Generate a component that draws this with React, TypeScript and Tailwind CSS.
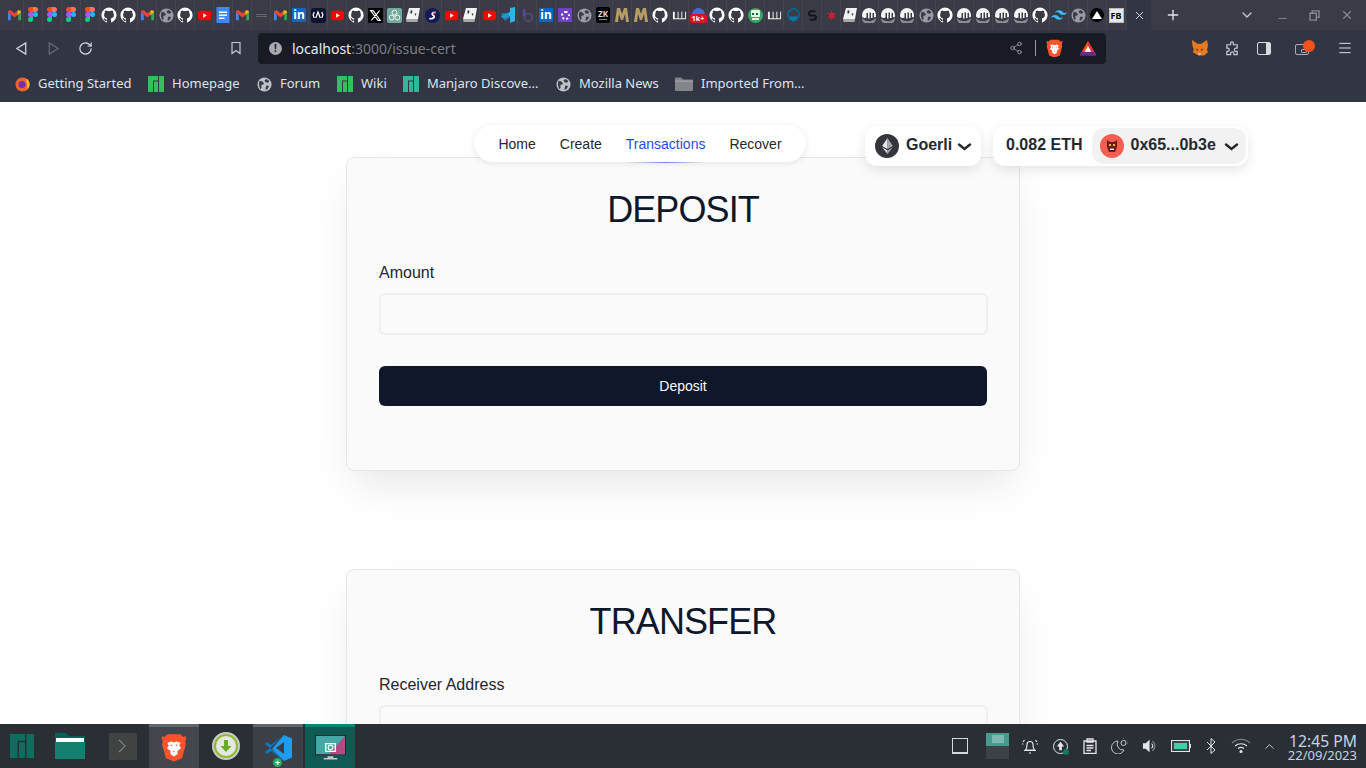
import { ChevronDown, ChevronUp, Menu, Minus, Plus, RotateCw, Share2, X } from 'lucide-react'
import type { ReactNode } from 'react'

const uiFont = "font-['Noto_Sans',sans-serif]"
const pageFont = "font-['Liberation_Sans',Arial,sans-serif]"

type TabIcon =
  | 'gmail' | 'figma' | 'github' | 'globe' | 'youtube' | 'docs' | 'dash' | 'linkedin'
  | 'anchor' | 'x' | 'gpt' | 'note' | 'stripe' | 'vs' | 'b' | 'gear' | 'zk' | 'gold'
  | 'bars' | 'badge' | 'bot' | 'headset' | 'sdark' | 'star' | 'mono' | 'wind' | 'tri' | 'fb'

const tabs: TabIcon[] = [
  'gmail', 'figma', 'figma', 'figma', 'figma', 'github', 'github', 'gmail', 'globe', 'github',
  'youtube', 'docs', 'gmail', 'dash', 'gmail', 'linkedin', 'anchor', 'youtube', 'github', 'x',
  'gpt', 'note', 'stripe', 'youtube', 'note', 'youtube', 'vs', 'b', 'linkedin', 'gear',
  'globe', 'zk', 'gold', 'gold', 'github', 'bars', 'badge', 'github', 'github', 'bot',
  'bars', 'headset', 'sdark', 'star', 'note', 'mono', 'mono', 'mono', 'globe', 'github',
  'mono', 'mono', 'mono', 'mono', 'github', 'wind', 'globe', 'tri', 'fb',
]

const githubPath =
  'M8 .6a7.6 7.6 0 0 0-2.4 14.8c.4.1.5-.2.5-.4v-1.4c-2.1.5-2.6-.9-2.6-.9-.3-.9-.8-1.1-.8-1.1-.7-.5 0-.5 0-.5.8.1 1.2.8 1.2.8.7 1.1 1.8.8 2.2.6.1-.5.3-.8.5-1-1.7-.2-3.5-.8-3.5-3.7 0-.8.3-1.5.8-2-.1-.2-.3-1 .1-2 0 0 .6-.2 2.1.8a7 7 0 0 1 3.8 0c1.5-1 2.1-.8 2.1-.8.4 1 .2 1.8.1 2 .5.5.8 1.2.8 2 0 2.9-1.8 3.5-3.5 3.7.3.2.5.7.5 1.4V15c0 .2.1.5.5.4A7.6 7.6 0 0 0 8 .6Z'

const tailwindPath =
  'M8 3.2c-2.133 0-3.467 1.067-4 3.2.8-1.067 1.733-1.467 2.8-1.2.609.152 1.044.594 1.525 1.083C9.108 7.08 10.015 8 12 8c2.133 0 3.467-1.067 4-3.2-.8 1.067-1.733 1.467-2.8 1.2-.609-.152-1.044-.594-1.525-1.083C10.892 4.12 9.985 3.2 8 3.2ZM4 8c-2.133 0-3.467 1.067-4 3.2.8-1.067 1.733-1.467 2.8-1.2.609.152 1.044.594 1.525 1.083C5.108 11.88 6.015 12.8 8 12.8c2.133 0 3.467-1.067 4-3.2-.8 1.067-1.733 1.467-2.8 1.2-.609-.152-1.044-.594-1.525-1.083C6.892 8.92 5.985 8 4 8Z'

function Globe({ color = '#9a9ca3' }: { color?: string }) {
  return (
    <svg viewBox="0 0 16 16" className="size-[15px]">
      <circle cx="8" cy="8" r="7.500" fill={color} />
      <path d="M3 4c2 0 3 1 4 2s0 2-1 2-2 1-1 3l-1 2C2 11 1.500 6 3 4Zm7-2 3 2-1 2-3-.5L8 3.500ZM10 9l3 .5-2 3.500-2 .5.5-3Z" fill="#3b3d48" />
    </svg>
  )
}

function MonoLogo() {
  return (
    <svg viewBox="0 0 16 16" className="size-4">
      <path d="M1 11a7 7 0 0 0 14 0c-2 2.500-5 3.500-8 3-3 0-5-1.500-6-3Z" fill="#8b8c91" />
      <path d="M1 8a7 7 0 0 1 14 0v1.500c-.500 1-1.500 1-2 .5V6h-1.500v5H10V5.500H8.500V11.500H7V6H5.500v4.500c-1 .800-3 .800-4.500-1Z" fill="#f4f4f4" />
    </svg>
  )
}

function TabGlyph({ kind }: { kind: TabIcon }) {
  switch (kind) {
    case 'gmail':
      return (
        <svg viewBox="0 0 16 16" className="size-[15px]">
          <path d="M1 4v9h3V7Z" fill="#4285f4" />
          <path d="M15 4v9h-3V7Z" fill="#34a853" />
          <path d="M1 4.500 8 10l3-2.300V3.300L8 5.500 4 2.500C2.500 1.800 1 3 1 4.500Z" fill="#ea4335" />
          <path d="M11 3.300v4.400l4-3.200c0-1.700-1.700-2.700-3-2Z" fill="#fbbc04" />
        </svg>
      )
    case 'figma':
      return (
        <svg viewBox="0 0 16 16" className="size-4">
          <path d="M5.500 0H8v5H5.500a2.500 2.500 0 0 1 0-5Z" fill="#f24e1e" />
          <path d="M8 0h2.500a2.500 2.500 0 0 1 0 5H8Z" fill="#ff7262" />
          <path d="M5.500 5H8v5H5.500a2.500 2.500 0 0 1 0-5Z" fill="#a259ff" />
          <circle cx="10.500" cy="7.500" r="2.500" fill="#1abcfe" />
          <path d="M5.500 10H8v2.500A2.500 2.500 0 1 1 5.500 10Z" fill="#0acf83" />
        </svg>
      )
    case 'github':
      return (
        <svg viewBox="0 0 16 16" className="size-4">
          <path d={githubPath} fill="#fff" />
          <path d="M5.300 3.600c1.500 1 4 1 5.400 0 .8.800 1.500 1.600 1.500 3 0 2.400-1.800 3.200-4.200 3.200S3.800 9 3.800 6.600c0-1.400.7-2.200 1.500-3Z" fill="#3a3b47" />
          <path d="M6.100 10.300h3.800v4.500H6.100Zm-3.400.8 2.600 1.800v1.200H4Z" fill="#3a3b47" />
        </svg>
      )
    case 'globe':
      return <Globe />
    case 'youtube':
      return (
        <svg viewBox="0 0 16 16" className="size-[15px]">
          <rect x="1" y="3" width="14" height="10" rx="3" fill="#f00" />
          <path d="m6.500 5.500 4 2.500-4 2.500Z" fill="#fff" />
        </svg>
      )
    case 'docs':
      return (
        <svg viewBox="0 0 16 16" className="size-4">
          <rect x="1.500" width="13" height="16" fill="#4285f4" />
          <path d="M4 4.500h8v1.500H4Zm0 3h8V9H4Zm0 3h5.500V12H4Z" fill="#fff" />
        </svg>
      )
    case 'dash':
      return <span className="block h-[3px] w-[11px] border-y border-[#666]" />
    case 'linkedin':
      return (
        <div className="flex size-[14px] items-center justify-center bg-[#0a66c2] text-[12px] font-bold leading-none text-white">in</div>
      )
    case 'anchor':
      return (
        <div className="flex size-[15px] items-center justify-center rounded-[3px] bg-[#10122e]">
          <svg viewBox="0 0 16 16" className="size-3" fill="none" stroke="#fff" strokeWidth="1.600">
            <path d="m5 12 3-8 3 8M3 4 1.500 8 3 12m10-8 1.500 4L13 12" />
          </svg>
        </div>
      )
    case 'x':
      return (
        <div className="flex size-[15px] items-center justify-center bg-black">
          <svg viewBox="0 0 16 16" className="size-[13px]" fill="none" stroke="#fff" strokeWidth="1.300">
            <path d="m2 2 9 12h3L5 2Zm11 0L3 14" />
          </svg>
        </div>
      )
    case 'gpt':
      return (
        <div className="flex size-[15px] items-center justify-center rounded-[2px] bg-[#74aa9c]">
          <svg viewBox="0 0 16 16" className="size-[13px]" fill="none" stroke="#fff" strokeWidth="1.100">
            <circle cx="8" cy="4.500" r="3" />
            <circle cx="4.500" cy="10.500" r="3" />
            <circle cx="11.500" cy="10.500" r="3" />
          </svg>
        </div>
      )
    case 'note':
      return (
        <svg viewBox="0 0 16 16" className="size-4">
          <path d="M4 1h11l-2 11H1Z" fill="#f2f2f2" />
          <path d="M1 12h12l-.5 3H1.500Z" fill="#a8a8a8" />
          <path d="M5.500 3.500h2l-.5 3h-1.500Zm4 3h2l-1 2.500Z" fill="#333" />
        </svg>
      )
    case 'stripe':
      return (
        <div className="flex size-[15px] items-center justify-center rounded-full bg-[#141a57]">
          <svg viewBox="0 0 16 16" className="size-[13px]" fill="none" stroke="#fff" strokeWidth="2">
            <path d="M12 4C8 4 6 6 9 8s0 4-5 4" />
            <path d="M12 4 9.500 5.500" stroke="#ef5350" />
          </svg>
        </div>
      )
    case 'vs':
      return (
        <svg viewBox="0 0 16 16" className="size-4">
          <path d="M15 0v14l-5 2V1Z" fill="#2fb2e8" />
          <path d="M10 5 1 9l3 3 6-3Z" fill="#21c6d8" />
          <path d="M1 6h7l2 4-5 4Z" fill="#1b8ad0" opacity=".8" />
        </svg>
      )
    case 'b':
      return (
        <svg viewBox="0 0 16 16" className="size-[15px]" fill="none">
          <circle cx="9" cy="10" r="4" stroke="#4d4866" strokeWidth="2.500" />
          <path d="M4.500 1v8" stroke="#5a4ba0" strokeWidth="2.500" />
        </svg>
      )
    case 'gear':
      return (
        <div className="flex size-[14px] items-center justify-center bg-[#6f42c1]">
          <div className="size-[9px] rounded-full border-2 border-dotted border-white" />
        </div>
      )
    case 'zk':
      return (
        <div className="flex h-4 w-[14px] flex-col items-center justify-center rounded-[2px] bg-black text-[8px] font-bold leading-[8px] text-[#ddd]">
          ZK
          <span className="mt-[1px] block h-[1px] w-[8px] bg-[#888]" />
        </div>
      )
    case 'gold':
      return (
        <svg viewBox="0 0 16 16" className="size-4">
          <path d="M1 15 3 1h3l2 6 2-6h3l2 14h-3l-1-8-2 6H7L5 7l-1 8Z" fill="#b49c63" />
        </svg>
      )
    case 'bars':
      return (
        <svg viewBox="0 0 16 16" className="size-[15px]" fill="#f4f4f4">
          <path d="M1 4h2v7h3V4h1v7h3V4h1v7h3V4h1v8H1Z" />
        </svg>
      )
    case 'badge':
      return (
        <div className="relative size-[15px]">
          <div className="absolute left-[1px] top-0 h-[8px] w-[13px] rounded-t-full bg-[#3f6fd6]" />
          <div className="absolute left-[-1px] top-[6px] flex h-[9px] w-[17px] items-center justify-center rounded-[2px] bg-[#d9112a] text-[7px] font-bold leading-none text-white">
            1k+
          </div>
        </div>
      )
    case 'bot':
      return (
        <div className="flex size-[15px] flex-col items-center justify-center rounded-full bg-[#3ba55d]">
          <div className="flex h-[7px] w-[9px] items-center justify-center gap-[2px] rounded-[1px] bg-[#e8f4ea]">
            <span className="size-[2px] bg-[#2a5a38]" />
            <span className="size-[2px] bg-[#2a5a38]" />
          </div>
          <div className="mt-[1px] h-[2px] w-[7px] bg-[#e8f4ea]" />
        </div>
      )
    case 'headset':
      return (
        <svg viewBox="0 0 16 16" className="size-[15px]" fill="none">
          <circle cx="8" cy="7" r="6" stroke="#086a93" strokeWidth="1.800" />
          <path d="M3 9h10l-5 6Z" fill="#0d7ba8" />
        </svg>
      )
    case 'sdark':
      return (
        <svg viewBox="0 0 16 16" className="size-[15px]" fill="none" stroke="#15161b" strokeWidth="2.200">
          <path d="M11 3.500H6.500a2 2 0 0 0 0 4.500h3a2 2 0 0 1 0 4.500H5" />
        </svg>
      )
    case 'star':
      return (
        <svg viewBox="0 0 16 16" className="size-[13px]" fill="#c8202f">
          <path d="m8 1 1.500 4.500 4.500-1-3 3.500 2.500 4-4.500-1L8 15l-.500-4-4.500 1 2.500-4-3-3.500 4.500 1Z" />
        </svg>
      )
    case 'mono':
      return <MonoLogo />
    case 'wind':
      return (
        <svg viewBox="0 0 16 16" className="size-4" fill="#38bdf8">
          <path d={tailwindPath} />
        </svg>
      )
    case 'tri':
      return (
        <div className="flex size-[14px] items-center justify-center rounded-full bg-black">
          <div className="size-0 border-x-[5px] border-b-[8px] border-x-transparent border-b-white" />
        </div>
      )
    case 'fb':
      return (
        <div className="flex h-[15px] w-[15px] items-center justify-center border border-[#bbb] bg-[#e8e8e8] text-[9px] font-bold leading-none text-black">
          FB
        </div>
      )
  }
}

function ManjaroLogo({ color, size = 16 }: { color: string; size?: number }) {
  return (
    <svg viewBox="0 0 16 16" width={size} height={size} fill={color}>
      <path d="M0 0h10v4.500H5V16H0ZM6 5.500h4V16H6ZM11 0h5v16h-5Z" />
    </svg>
  )
}

function BraveLogo({ size = 18 }: { size?: number }) {
  return (
    <svg viewBox="0 0 20 22" width={size} height={size * 1.100}>
      <path d="M5 1h10l2 2 2-.5.500 2-1 2 .7 2-3 11L10 22l-6.200-2.500-3-11 .7-2-1-2 .5-2L3 3Z" fill="#fb542b" />
      <path d="M5 7.500 8 6.500l2 .8 2-.8 3 1-1 2.500 1.500 1.500L12.500 14l.5 2-3 2-3-2 .5-2-3-2.500L6 10Z" fill="#fff" />
      <path d="M7 9h2l-1 1.200Zm4 0h2l-1 1.200ZM9 14h2l-1 1Z" fill="#fb542b" />
    </svg>
  )
}

function BookmarkLink({ icon, label, width }: { icon: ReactNode; label: string; width: string }) {
  return (
    <div className={`flex shrink-0 items-center ${width}`}>
      <span className="flex w-4 shrink-0 items-center justify-center">{icon}</span>
      <span className="ml-2 whitespace-nowrap text-[13px] text-[#dde3ee]">{label}</span>
    </div>
  )
}

function BrowserChrome() {
  return (
    <header className={`${uiFont} shrink-0`}>
      <div className="flex h-[30px] items-center bg-[#3a3b47] pl-[5px]">
        {tabs.map((kind, i) => (
          <div key={i} className="flex h-[30px] w-[19px] shrink-0 items-center justify-center border-r border-[#444551]">
            <TabGlyph kind={kind} />
          </div>
        ))}
        <div className="ml-[1px] flex h-[30px] w-[24px] shrink-0 items-center justify-center rounded-t-[4px] bg-[#313544]">
          <X size={13} color="#d8dae0" strokeWidth={1.800} />
        </div>
        <Plus size={16} color="#e4e5ea" strokeWidth={2} className="ml-[14px]" />
        <ChevronDown size={16} color="#c8c9cf" className="ml-[58px]" />
        <Minus size={13} color="#7d7e88" strokeWidth={2} className="ml-[21px] mt-[6px]" />
        <svg viewBox="0 0 12 12" className="ml-[20px] size-[11px]" fill="none" stroke="#85868f" strokeWidth="1.500">
          <path d="M3.500 3V1H11v7H8.500M1 3.500h7V11H1Z" />
        </svg>
        <X size={14} color="#85868f" strokeWidth={2} className="ml-[20px]" />
      </div>

      <div className="flex h-9 items-center bg-[#313544]">
        <svg viewBox="0 0 14 16" className="ml-[14px] size-[15px]" fill="none" stroke="#d6d8e0" strokeWidth="1.300">
          <path d="M11.500 2v12L2 8Z" />
        </svg>
        <svg viewBox="0 0 14 16" className="ml-[17px] size-[15px]" fill="none" stroke="#666a7a" strokeWidth="1.300">
          <path d="M2.500 2v12L12 8Z" />
        </svg>
        <RotateCw size={15} color="#dcdee5" strokeWidth={1.800} className="ml-[17px]" />
        <svg viewBox="0 0 12 14" className="ml-[136px] size-[14px]" fill="none" stroke="#c7c9d1" strokeWidth="1.200">
          <path d="M2 1.500h8v11L6 9.500l-4 3Z" />
        </svg>
        <div className="ml-[15px] flex h-[31px] w-[848px] items-center rounded-[4px] bg-[#181b23] pl-[11px] pr-[9px]">
          <span className="flex size-[13px] items-center justify-center rounded-full bg-[#a8a9af] text-[10px] font-bold leading-none text-[#181b23]">!</span>
          <span className="ml-[10px] text-[14px] text-[#e8e9ee]">localhost</span>
          <span className="text-[14px] text-[#7b7d86]">:3000/issue-cert</span>
          <Share2 size={14} color="#b6b8c0" strokeWidth={1.200} className="ml-auto" />
          <span className="ml-[12px] h-4 w-px bg-[#9a9ca4]" />
          <span className="ml-[10px] flex"><BraveLogo size={17} /></span>
          <svg viewBox="0 0 20 18" className="ml-[16px] h-[15px] w-[18px]">
            <path d="M10 0 20 17H0Z" fill="#ff5000" />
            <path d="M10 0 20 17H10Z" fill="#e0323c" />
            <path d="M0 17h20l-3-4H3Z" fill="#662d91" />
            <path d="m10 6 4 7H6Z" fill="#fff" />
          </svg>
        </div>
        <svg viewBox="0 0 18 17" className="ml-[85px] h-[16px] w-[17px]">
          <path d="M1 0 7 4h4l6-4 1 6-1 4 1 3-4 3.500h-6L2 13l1-3-1.500-4Z" fill="#e8791e" />
          <path d="M5 9 7.500 10 7 12Zm8 0L10.500 10l.5 2Z" fill="#3a2a1a" />
          <path d="m7 14 2 2.500 2-2.500Z" fill="#d8c8b8" />
        </svg>
        <svg viewBox="0 0 16 16" className="ml-[17px] size-[15px]" fill="none" stroke="#c9cbd3" strokeWidth="1.300">
          <path d="M6 2.500c0-2 3-2 3 0V4h4v3.500h-1.500c-2 0-2 3.500 0 3.500H13v3.500H9.500V13c0-2-3.500-2-3.500 0v1.500H2V11h1c2 0 2-3.500 0-3.500H2V4h4Z" />
        </svg>
        <div className="ml-[17px] flex h-[13px] w-[14px] justify-end rounded-[2px] border border-[#d8dae1]">
          <div className="w-[4px] bg-[#d8dae1]" />
        </div>
        <div className="relative ml-[24px] mt-[3px] h-[11px] w-[14px] rounded-[2px] border border-[#a9abb4]">
          <span className="absolute bottom-[1px] right-[1px] h-[4px] w-[6px] rounded-[1px] border border-[#a9abb4]" />
          <span className="absolute -right-[7px] -top-[5px] size-[12px] rounded-full bg-[#f4511e]" />
        </div>
        <Menu size={16} color="#dcdee5" strokeWidth={1.500} className="ml-[28px]" />
      </div>

      <div className="flex h-9 items-center bg-[#313544] pl-[14px]">
        <BookmarkLink
          width="w-[134px]"
          label="Getting Started"
          icon={
            <svg viewBox="0 0 16 16" className="size-[15px]">
              <circle cx="8" cy="8" r="7.500" fill="#f0642c" />
              <path d="M12 1.500A7.500 7.500 0 0 1 15.500 8c0 2-1 4-2.500 5.500 1-4-1-7-1-12Z" fill="#ffbd2e" />
              <circle cx="7.500" cy="8" r="3.800" fill="#6c2fb5" />
            </svg>
          }
        />
        <BookmarkLink width="w-[108px]" label="Homepage" icon={<ManjaroLogo color="#35bf5c" />} />
        <BookmarkLink width="w-[81px]" label="Forum" icon={<Globe color="#bfc1c8" />} />
        <BookmarkLink width="w-[66px]" label="Wiki" icon={<ManjaroLogo color="#35bf5c" />} />
        <BookmarkLink width="w-[152px]" label="Manjaro Discove..." icon={<ManjaroLogo color="#33b59b" />} />
        <BookmarkLink width="w-[120px]" label="Mozilla News" icon={<Globe color="#bfc1c8" />} />
        <div className="flex shrink-0 items-center">
          <svg viewBox="0 0 18 14" className="h-[14px] w-[18px]">
            <path d="M0 1.500A1 1 0 0 1 1 .5h5l2 2h9a1 1 0 0 1 1 1V13a1 1 0 0 1-1 1H1a1 1 0 0 1-1-1Z" fill="#84858b" />
            <path d="M0 3.500h18V5H0Z" fill="#9c9da3" />
          </svg>
          <span className="ml-2 whitespace-nowrap text-[13px] text-[#dde3ee]">Imported From...</span>
        </div>
      </div>
    </header>
  )
}

function EthBadge({ size }: { size: number }) {
  return (
    <div className="flex shrink-0 items-center justify-center rounded-full bg-[#33363d]" style={{ width: size, height: size }}>
      <svg viewBox="0 0 12 18" className="h-[16px] w-[11px]">
        <path d="M6 0 0 9l6 3.500Z" fill="#e9e9ea" />
        <path d="M6 0l6 9-6 3.500Z" fill="#a7a8ab" />
        <path d="M0 10.500 6 18v-4Z" fill="#e9e9ea" />
        <path d="m12 10.500-6 7.500v-4Z" fill="#a7a8ab" />
      </svg>
    </div>
  )
}

function TopNav() {
  return (
    <div className={`${pageFont} absolute left-0 right-0 top-0`}>
      <nav className="absolute left-[474px] top-[23px] flex h-[37px] w-[332px] items-center justify-center gap-6 rounded-full bg-white text-sm text-[#27272a] shadow-[0_1px_6px_rgba(0,0,0,0.1)]">
        <span>Home</span>
        <span>Create</span>
        <span className="relative text-[#1d4ed8]">
          Transactions
          <span className="absolute -bottom-[9px] left-0 h-px w-full bg-gradient-to-r from-transparent via-[#3b5bdb]/70 to-transparent" />
        </span>
        <span>Recover</span>
      </nav>
      <div className="absolute left-[865px] top-[24px] flex h-[40px] w-[116px] items-center rounded-xl bg-white pl-[10px] text-base font-bold text-[#25292e] shadow-[0_4px_12px_rgba(0,0,0,0.1)]">
        <EthBadge size={24} />
        <span className="mb-[2px] ml-[7px]">Goerli</span>
        <svg viewBox="0 0 14 8" className="ml-[5px] mt-[2px] h-[8px] w-[15px]" fill="none" stroke="#25292e" strokeWidth="2.400" strokeLinecap="round">
          <path d="m1.500 1.500 5.500 4.500 5.500-4.500" />
        </svg>
      </div>
      <div className="absolute left-[993px] top-[24px] flex h-[40px] w-[255px] items-center rounded-xl bg-white text-base font-bold text-[#25292e] shadow-[0_4px_12px_rgba(0,0,0,0.1)]">
        <span className="mb-[2px] ml-[13px]">0.082 ETH</span>
        <div className="ml-[10px] flex h-9 w-[154px] items-center rounded-xl bg-[#f2f2f3] pl-2">
          <div className="flex size-6 items-center justify-center rounded-full bg-[#f25f52]">
            <svg viewBox="0 0 14 14" className="size-[14px]">
              <path d="M2 1 5 3h4l3-2v7l-2 5H4L2 8Z" fill="#6b1d14" />
              <path d="M4 5h2v2H4Zm4 0h2v2H8Z" fill="#f5b13d" />
              <path d="M5 9.500h4V11H5Z" fill="#f5e3c0" />
            </svg>
          </div>
          <span className="mb-[2px] ml-[6px]">0x65...0b3e</span>
          <svg viewBox="0 0 14 8" className="ml-[8px] mt-[2px] h-[8px] w-[15px]" fill="none" stroke="#25292e" strokeWidth="2.400" strokeLinecap="round">
            <path d="m1.500 1.500 5.500 4.500 5.500-4.500" />
          </svg>
        </div>
      </div>
    </div>
  )
}

function FormCard({ title, field, action }: { title: string; field: string; action?: string }) {
  return (
    <section className="mx-auto w-[674px] shrink-0 rounded-lg border border-[#e5e7eb] bg-[#fafafa] px-8 pb-[64px] pt-[31.5px] shadow-[0_20px_40px_-8px_rgba(0,0,0,0.1)]">
      <h2 className="text-center text-4xl leading-10 tracking-tight text-[#0f172a]">{title}</h2>
      <label className="mt-[31px] block text-base leading-6 text-[#1f2430]">{field}</label>
      <div className="mt-[8px] h-[42px] w-[609px] rounded-md border-2 border-[#efefef] bg-[#fafafa]" />
      {action && (
        <button type="button" className="mt-[31px] h-10 w-[608px] rounded-md bg-[#0f172a] text-sm text-[#f8fafc]">
          {action}
        </button>
      )}
    </section>
  )
}

function Taskbar() {
  return (
    <footer className={`${uiFont} flex h-11 shrink-0 items-stretch bg-[#2a2e35]`}>
      <div className="flex w-[44px] items-center justify-center">
        <ManjaroLogo color="#0d6d5f" size={24} />
      </div>
      <div className="flex w-[52px] items-center justify-center">
        <svg viewBox="0 0 30 26" className="h-[26px] w-[30px]">
          <path d="M0 0h11l3 3h16v23H0Z" fill="#0b5f56" />
          <path d="M1 5h28v5H1Z" fill="#fff" />
          <path d="M0 9h30v17H0Z" fill="#157f70" />
        </svg>
      </div>
      <div className="flex w-[53px] items-center justify-center">
        <div className="flex h-[27px] w-[28px] items-center justify-center bg-[#3f4443]">
          <svg viewBox="0 0 10 16" className="h-[14px] w-[9px]" fill="none" stroke="#8a8f8d" strokeWidth="1.200">
            <path d="m1 1 7 7-7 7" />
          </svg>
        </div>
      </div>
      <div className="flex w-[50px] items-center justify-center border-t-[3px] border-[#62666c] bg-[#43474d]">
        <BraveLogo size={26} />
      </div>
      <div className="flex w-[54px] items-center justify-center">
        <div className="flex size-[28px] items-center justify-center rounded-full border-2 border-[#c8cbc6] bg-[#8dbb35]">
          <div className="flex size-[20px] items-center justify-center rounded-full bg-[#e5e8e0]">
            <svg viewBox="0 0 12 12" className="size-3">
              <path d="M4 0h4v6h3.500L6 12 .5 6H4Z" fill="#67ad1e" />
            </svg>
          </div>
        </div>
      </div>
      <div className="relative flex w-[50px] items-center justify-center border-t-[3px] border-[#62666c] bg-[#3b3f46]">
        <svg viewBox="0 0 28 28" className="size-[28px]">
          <path d="M20 1 28 4.500v19L20 27 8 15Z" fill="#1f9cf0" />
          <path d="M20 1 6 14 1 10 3 8l4 3 13-10Z" fill="#0a7bc4" />
          <path d="M20 27 6 14l-5 4 2 2 4-3 13 10Z" fill="#0a7bc4" />
          <path d="M20 8v12l-8-6Z" fill="#3b3f46" />
        </svg>
        <span className="absolute bottom-[1px] left-[20px] flex size-[9px] items-center justify-center rounded-full bg-[#27ae60] text-[9px] font-bold leading-none text-white">+</span>
      </div>
      <div className="ml-[2px] flex w-[50px] items-center justify-center border-t-[3px] border-[#008a74] bg-[#0f5a52]">
        <svg viewBox="0 0 32 28" className="h-[27px] w-[31px]">
          <rect x="0" y="1" width="32" height="21" fill="#20262b" />
          <path d="M1 2h30v19H1Z" fill="#46a8a6" />
          <path d="M31 2v19H14Z" fill="#b34a86" />
          <path d="M11 10h10v8H11Z" fill="none" stroke="#fff" strokeWidth="1.500" />
          <circle cx="16" cy="14" r="2.400" fill="none" stroke="#fff" strokeWidth="1.200" />
          <path d="M13 23h6v2h4v1.500H9V25h4Z" fill="#c7c9cb" />
        </svg>
      </div>

      <div className="ml-auto flex items-center text-[#e3e5e8]">
        <div className="size-[16px] border border-b-2 border-[#d5d7da]" />
        <div className="ml-[18px] flex h-[27px] w-[23px] flex-col">
          <div className="flex h-[13px] items-center justify-center bg-[#479b8e]">
            <div className="h-[8px] w-[12px] bg-[#7cb8af]" />
          </div>
          <div className="h-[13px] bg-[#3e4247]" />
        </div>
        <svg viewBox="0 0 18 18" className="ml-[12px] size-[18px]" fill="none" stroke="#e3e5e8" strokeWidth="1.200">
          <path d="M4.500 13c1.500-1.500 1.500-4 1.500-5.500a3 3 0 0 1 6 0c0 1.500 0 4 1.500 5.500ZM3 13.500h12M8 16h2M3.500 3 2 5m0 2.500-.5-1M14.500 3 16 5m0 2.500.5-1" />
        </svg>
        <div className="relative ml-[14px] size-[15px] rounded-full border border-[#e3e5e8]">
          <svg viewBox="0 0 14 14" className="size-[13px]" fill="#e3e5e8">
            <path d="M7 2 11 7H8.500v4h-3V7H3Z" />
          </svg>
          <span className="absolute -bottom-[2px] -right-[2px] size-[6px] rounded-full bg-[#0e7a66]" />
        </div>
        <svg viewBox="0 0 14 16" className="ml-[15px] h-[16px] w-[14px]" fill="none" stroke="#e3e5e8" strokeWidth="1.300">
          <path d="M1 3h12v12.500H1ZM4 1h6v3H4ZM3.500 7.500h7M3.500 10h7M3.500 12.500H8" />
        </svg>
        <svg viewBox="0 0 18 16" className="ml-[14px] h-[16px] w-[18px]" fill="none" stroke="#c5c7cb" strokeWidth="1">
          <path d="M7 3a6.500 6.500 0 1 0 6 9A6 6 0 0 1 7 3Z" />
          <circle cx="12.500" cy="5" r="2.500" />
          <path d="M12.500.5V1m3 1-.5.500m2 2.500h-.5" />
        </svg>
        <svg viewBox="0 0 18 16" className="ml-[13px] h-[16px] w-[17px]">
          <path d="M1 5h3l4-4v14l-4-4H1Z" fill="#e3e5e8" />
          <path d="M11 3a6 6 0 0 1 0 10" fill="none" stroke="#8a8d92" strokeWidth="1.200" />
          <path d="M10 5.500a3 3 0 0 1 0 5" fill="none" stroke="#e3e5e8" strokeWidth="1.200" />
        </svg>
        <div className="ml-[12px] flex h-[12px] w-[19px] items-center justify-center border border-[#e3e5e8] bg-white/10">
          <div className="h-[6px] w-[13px] bg-[#3fcfa9]" />
        </div>
        <span className="h-[4px] w-[1px] bg-[#e3e5e8]" />
        <svg viewBox="0 0 10 16" className="ml-[15px] h-[16px] w-[10px]" fill="none" stroke="#e3e5e8" strokeWidth="1">
          <path d="m1 4 8 8-4 3.500V.5l4 3.500-8 8" />
        </svg>
        <svg viewBox="0 0 20 16" className="ml-[15px] h-[16px] w-[20px]" fill="none" stroke="#e3e5e8" strokeWidth="1.100">
          <path d="M1 5a13 13 0 0 1 18 0" stroke="#777a80" />
          <path d="M4 8a9 9 0 0 1 12 0M7 10.500a5 5 0 0 1 6 0" />
          <circle cx="10" cy="13.500" r="1" fill="#e3e5e8" />
        </svg>
        <ChevronUp size={15} color="#e3e5e8" strokeWidth={1.300} className="ml-[11px]" />
        <div className="ml-[11px] mr-[9px] mt-[3px] flex w-[69px] flex-col items-end text-[#c3d4ea]">
          <span className="whitespace-nowrap text-[15.7px] leading-[16px]">12:45 PM</span>
          <span className="whitespace-nowrap text-[13px] leading-[13px]">22/09/2023</span>
        </div>
      </div>
    </footer>
  )
}

export default function App() {
  return (
    <div className="flex h-[768px] w-[1366px] flex-col overflow-hidden bg-white">
      <BrowserChrome />
      <main className={`${pageFont} relative flex min-h-0 flex-1 flex-col gap-[98.5px] overflow-hidden pt-[55px]`}>
        <FormCard title="DEPOSIT" field="Amount" action="Deposit" />
        <FormCard title="TRANSFER" field="Receiver Address" />
        <TopNav />
      </main>
      <Taskbar />
    </div>
  )
}
